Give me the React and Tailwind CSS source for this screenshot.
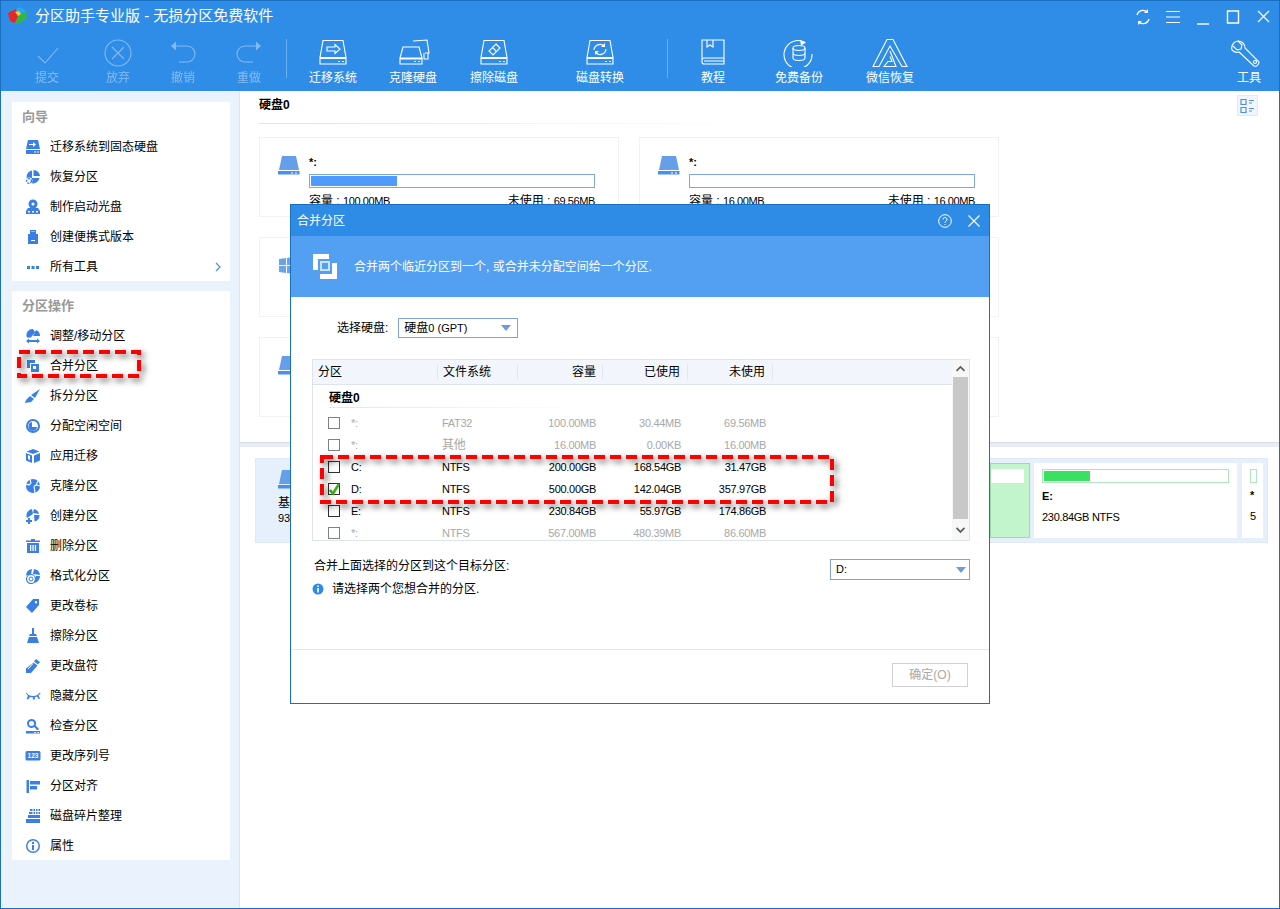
import React from 'react';

const FONT = { fontFamily: '"Liberation Sans", "Noto Sans CJK SC", sans-serif' };

const Blue = ({ children }) => (
  <svg viewBox="0 0 16 16" width="16" height="16" className="shrink-0 text-[#3a80e4]" fill="currentColor">{children}</svg>
);

const Pie = () => <path d="M7 1.500A6.500 6.500 0 1 0 14.500 9H7zM8.500 1v6H15A6.500 6.500 0 0 0 8.500 1z" />;

const SIDE_ICONS = {
  migrate: <><path d="M3 1h10l2 9H1z" /><path d="M4 5h4V3l3 2.500L8 8V6H4z" fill="#fff" /><path fillRule="evenodd" d="M1 11h14v4H1zM9 12.500v1h2v-1zM12 12.500v1h2v-1z" /></>,
  recover: <><Pie /><circle cx="4" cy="12" r="3.400" fill="#fff" /><circle cx="4" cy="12" r="2.400" fill="none" stroke="currentColor" strokeWidth="1.400" strokeDasharray="2 1" /></>,
  boot: <><circle cx="8" cy="5" r="4.500" /><circle cx="8" cy="5" r="1.500" fill="#fff" /><path fillRule="evenodd" d="M3 9l-2 3v3h14v-3l-2-3zM3 12v1.500h2V12zM7 12v1.500h2V12zM11 12v1.500h2V12z" /></>,
  usb: <><path fillRule="evenodd" d="M5 1h6v4H5zM6.500 2v1h1V2zM8.500 2v1h1V2z" /><path fillRule="evenodd" d="M3 5h10v10H3zM6 11v1h4v-1z" /></>,
  dots: <path d="M2 7h3v3H2zM6.500 7h3v3h-3zM11 7h3v3h-3z" />,
  resize: <><path d="M7 1A6 6 0 0 0 2 9.500h4L10 4 8 1zM11 2l-3 6h7a6.500 6.500 0 0 0-4-6z" /><path d="M1 13l3-2.500V12h8v-1.500l3 2.500-3 2.500V14H4v1.500z" /></>,
  merge: <><path d="M2 2h8v3H5v5H2z" /><path fillRule="evenodd" d="M6 6h8v8H6zM8 8v3h3V8z" /></>,
  split: <><path d="M15 1l-5 9-4-3z" /><path d="M5 8l4 3-3 3-6 1 1-3z" /></>,
  free: <><path fillRule="evenodd" d="M8 1a7 7 0 1 0 0 14A7 7 0 0 0 8 1zm0 2a5 5 0 1 1 0 10A5 5 0 0 1 8 3z" /><path d="M7 4v5h5a4 4 0 0 1-5 3.800A4.500 4.500 0 0 1 7 4z" /></>,
  app: <><path d="M8 1l6.500 2.500L8 6 1.500 3.500z" /><path d="M1 5l6 2.500V15l-6-2.500zM9 7.500L15 5v7.500L9 15z" /><path d="M3 7l2 1v4l-2-1z" fill="#fff" /></>,
  clone: <><circle cx="8" cy="8" r="7" /><path d="M5 1l1 4-2 2-3-1M9 8l3-1 3 1M9 8l1 7M13 3l-2 4" stroke="#fff" strokeWidth="1.100" fill="none" /></>,
  create: <><path d="M7 1a6.500 6.500 0 0 0-5 9l6-4zM9 1l-1 4 6 1a6.500 6.500 0 0 0-5-5zM9 7l5.500 0a6.500 6.500 0 0 1-5 6.500z" /><path d="M3 10h2v2h2v2H5v2H3v-2H1v-2h2z" /></>,
  del: <><path d="M6 1h4v1.500h5V4H1V2.500h5z" /><path fillRule="evenodd" d="M2 5h12v10H2zM5 7v6h1.300V7zM7.400 7v6h1.300V7zM9.800 7v6h1.300V7z" /></>,
  format: <><path d="M7 1a7 7 0 0 0-6 6.500l5-1zM9 1l-1 5 7 1a7 7 0 0 0-6-6z" /><circle cx="6" cy="11" r="4.500" fill="none" stroke="currentColor" strokeWidth="1.200" /><circle cx="6" cy="11" r="2" fill="none" stroke="currentColor" strokeWidth="1" /><path d="M11 8h4a7 7 0 0 1-6 7z" /></>,
  label: <path fillRule="evenodd" d="M8 1h6v6l-7 8-6-6zM11 3a1.200 1.200 0 1 0 0 2.400A1.200 1.200 0 0 0 11 3z" />,
  wipe: <><path d="M7 0h2v6H7z" /><path d="M5 6h6l1 2H4z" /><path d="M4 9h8l2 6H2z" /></>,
  letter: <><path d="M11 1l4 3-2 2.500-4-3z" /><path d="M8.500 4.500l4 3L6 15H1v-4.500z" /><path d="M3 11l5-5.500" stroke="#fff" strokeWidth="1" /></>,
  hide: <path d="M1 4.500C3 7 5 8 8 8s5-1 7-3.500l.5 1-2 2 1.500 3-1.500.5-1.500-2.500-2.300.8.300 2.200H7.700l.3-2.200-3-.4L3 11.500 1.500 11l1.500-3-2-2.500z" />,
  check: <><path fillRule="evenodd" d="M6.500 1a4.500 4.500 0 1 0 2.700 8.100L12 12h1.600v-1.500L10.700 7.600A4.500 4.500 0 0 0 6.500 1zm0 2a2.500 2.500 0 1 1 0 5 2.500 2.500 0 0 1 0-5z" /><path fillRule="evenodd" d="M1 13h14v2.500H1zM9 14v.8h2V14zM12 14v.8h2V14z" /></>,
  serial: <><rect x="0.500" y="3" width="15" height="9.500" rx="1.500" /><text x="8" y="10.200" textAnchor="middle" fontSize="6.500" fontWeight="700" fill="#fff" style={FONT}>123</text></>,
  align: <path d="M1.500 2h2.500v13H1.500zM5 3h10v3.500H5zM5 8h7v3.500H5z" />,
  defrag: <path d="M5 1h2.500v2H5zM8.500 1H10v2H8.500zM11 1h1.500v2H11zM13.500 1H15v2h-1.500zM4 4h3.500v2H4zM8.500 4H10v2H8.500zM11 4h1.500v2H11zM13.500 4H15v2h-1.500zM3 7h12v3H3zM1 11h14v4H1z" />,
  info: <><path fillRule="evenodd" d="M8 1a7 7 0 1 0 0 14A7 7 0 0 0 8 1zm0 1.500a5.500 5.500 0 1 1 0 11 5.500 5.500 0 0 1 0-11z" /><path d="M7 4h2v2H7zM7 7h2v5H7z" /></>,
};

const WIZARD = [
  ['migrate', '迁移系统到固态硬盘'],
  ['recover', '恢复分区'],
  ['boot', '制作启动光盘'],
  ['usb', '创建便携式版本'],
  ['dots', '所有工具'],
];

const OPS = [
  ['resize', '调整/移动分区'],
  ['merge', '合并分区'],
  ['split', '拆分分区'],
  ['free', '分配空闲空间'],
  ['app', '应用迁移'],
  ['clone', '克隆分区'],
  ['create', '创建分区'],
  ['del', '删除分区'],
  ['format', '格式化分区'],
  ['label', '更改卷标'],
  ['wipe', '擦除分区'],
  ['letter', '更改盘符'],
  ['hide', '隐藏分区'],
  ['check', '检查分区'],
  ['serial', '更改序列号'],
  ['align', '分区对齐'],
  ['defrag', '磁盘碎片整理'],
  ['info', '属性'],
];

const SideItem = ({ icon, text, arrow }) => (
  <div className="flex h-[30px] items-center pl-[13px] pr-[9px] pt-[2px] text-xs text-black">
    <Blue>{SIDE_ICONS[icon]}</Blue>
    <span className="ml-[9px] flex-1">{text}</span>
    {arrow && (
      <svg width="6" height="10" viewBox="0 0 6 10" fill="none" stroke="#4a90e8" strokeWidth="1.200">
        <path d="M1 1l4 4-4 4" />
      </svg>
    )}
  </div>
);

const DiskBase = ({ children }) => (
  <>
    <path d="M10 1.500h20l3 17H7z" />
    <path d="M7 19.500h26v5.500H7zM25 22.500h2M29 22.500h2" />
    {children}
  </>
);

const TOOL_ICONS = {
  commit: <path d="M11 17l7 7 13-15" />,
  discard: <><circle cx="20" cy="14" r="13" /><path d="M14 8l12 12M26 8L14 20" /></>,
  undo: <><path d="M9 7h15a8 8 0 0 1 8 8v0a8 8 0 0 1-8 8h-8" /><path d="M13 2.500L8 7l5 4.500z" fill="#fff" stroke="none" /></>,
  redo: <><path d="M31 7H16a8 8 0 0 0-8 8v0a8 8 0 0 0 8 8h8" /><path d="M27 2.500L32 7l-5 4.500z" fill="#fff" stroke="none" /></>,
  migrate: <DiskBase><path d="M14 8h8V5.500l5 4.500-5 4.500V12h-8z" /></DiskBase>,
  clone: (
    <>
      <path d="M20 2l14-1 2 13h-4M31 14v6h4v-6" />
      <path d="M10 8h16l3 11H7zM7 20h22v5H7zM21 22.500h2M25 22.500h2" />
    </>
  ),
  wipe: <DiskBase><path d="M22 5l4 4-7 7-4-4zM18 8l4 4" /></DiskBase>,
  convert: <DiskBase><path d="M14 11a6 6 0 0 1 10-4M26 10a6 6 0 0 1-10 4" /><path d="M25 4v4h-4zM15 16v-4h4z" fill="#fff" stroke="none" /></DiskBase>,
  book: <><path d="M9 1h22v24H11a2 2 0 0 1-2-2zM9 21a2 2 0 0 1 2-2h20M11 22h20" /><path d="M14 1v7l3-2 3 2V1" /></>,
  backup: <><path d="M26 3.500A14 14 0 1 0 33 15" /><path d="M21 1l6 2.500-5 3z" fill="#fff" stroke="none" /><ellipse cx="20" cy="9" rx="6" ry="2.500" /><path d="M14 9v10c0 1.500 3 2.500 6 2.500s6-1 6-2.500V9M14 14c0 1.500 3 2.500 6 2.500s6-1 6-2.500" /></>,
  recover: <><path d="M17 .500h6l14 27h-5L20 7 9 27.500H3z" /><path d="M20 12l6 15.500H14l4-5h4l-2-5" /></>,
  tools: <><path d="M9 2a7 7 0 0 0-6 9c2 2 4 3 7 2l15 14c3 1 5-2 5-4L16 9c0-4-3-7-7-7zM9 2l4 4-1 4-4 1-4-4" /><circle cx="26" cy="23" r="1.500" /></>,
};

const TOOLS = [
  { icon: 'commit', text: '提交', w: 'w-[70px]', off: true },
  { icon: 'discard', text: '放弃', w: 'w-[72px]', off: true },
  { icon: 'undo', text: '撤销', w: 'w-[58px]', off: true },
  { icon: 'redo', text: '重做', w: 'w-[74px]', off: true },
  { sep: true },
  { icon: 'migrate', text: '迁移系统', w: 'w-[92px]' },
  { icon: 'clone', text: '克隆硬盘', w: 'w-[68px]' },
  { icon: 'wipe', text: '擦除磁盘', w: 'w-[94px]' },
  { icon: 'convert', text: '磁盘转换', w: 'w-[118px]' },
  { spacer: true },
  { sep: true },
  { icon: 'book', text: '教程', w: 'w-[90px]' },
  { icon: 'backup', text: '免费备份', w: 'w-[82px]' },
  { icon: 'recover', text: '微信恢复', w: 'w-[100px]' },
];

const ToolItem = ({ icon, text, w, off }) => (
  <div className={`flex flex-col items-center ${w} ${off ? 'opacity-40' : ''}`}>
    <svg viewBox="0 0 40 28" width="40" height="28" fill="none" stroke="#fff" strokeWidth="1.100">{TOOL_ICONS[icon]}</svg>
    <span className="mt-[5px] text-xs leading-[12px] text-white">{text}</span>
  </div>
);

const DiskGlyph = () => (
  <svg width="22" height="19" viewBox="0 0 22 19" className="shrink-0">
    <path d="M4 0h14l3 14H1z" fill="#669fe9" />
    <path fillRule="evenodd" d="M0 15h21.500v3.500H0zM13 16.500v1h2v-1zM17 16.500v1h2v-1z" fill="#4b8fe8" />
  </svg>
);

const WinGlyph = () => (
  <svg width="20" height="19" viewBox="0 0 20 19" className="shrink-0" fill="#6ba3ea">
    <path d="M1 3l7-1v7H1zM9 2l9-1.500V9H9zM1 10h7v7l-7-1zM9 10h9v8.500L9 17z" />
  </svg>
);

const PartCard = ({ used, cap, free, glyph, hidden }) => (
  <div className="h-[80px] w-[360px] border border-[#f0f2f5] bg-white">
    <div className="flex pl-[18px] pt-[18px]">
      {glyph}
      <div className={`ml-[9px] w-[286px] ${hidden ? 'invisible' : ''}`}>
        <div className="h-[18px] text-[11px] font-bold leading-[12px] text-black">*:</div>
        <div className="h-[14px] border border-[#7fa8e0] bg-white p-[1px]">
          <div className="h-full bg-[#4e9bfb]" style={{ width: used }} />
        </div>
        <div className="mt-[6px] flex justify-between text-xs leading-[14px] text-black">
          <span>容量 : <span className="text-[11px] tracking-[-0.4px]">{cap}</span></span>
          <span>未使用 : <span className="text-[11px] tracking-[-0.4px]">{free}</span></span>
        </div>
      </div>
    </div>
  </div>
);

const ROWS = [
  { name: '*:', fs: 'FAT32', cap: '100.00MB', used: '30.44MB', free: '69.56MB', off: true },
  { name: '*:', fs: '其他', cap: '16.00MB', used: '0.00KB', free: '16.00MB', off: true },
  { name: 'C:', fs: 'NTFS', cap: '200.00GB', used: '168.54GB', free: '31.47GB' },
  { name: 'D:', fs: 'NTFS', cap: '500.00GB', used: '142.04GB', free: '357.97GB', checked: true },
  { name: 'E:', fs: 'NTFS', cap: '230.84GB', used: '55.97GB', free: '174.86GB' },
  { name: '*:', fs: 'NTFS', cap: '567.00MB', used: '480.39MB', free: '86.60MB', off: true },
];

const Row = ({ r }) => (
  <div className={`flex h-[22px] shrink-0 items-center text-[11px] tracking-[-0.3px] ${r.off ? 'text-[#a8a8a8]' : 'text-black'}`}>
    <div className={`relative ml-[15px] h-[12px] w-[12px] border ${r.off ? 'border-[#808080]' : 'border-[#303030]'}`}>
      {r.checked && (
        <svg className="absolute -left-[1px] -top-[2px]" width="13" height="14" viewBox="0 0 13 14" fill="none" stroke="#3cae1c" strokeWidth="2.600">
          <path d="M2 8l3 3.500L11 2" />
        </svg>
      )}
    </div>
    <span className="ml-[11px] w-[91px]">{r.name}</span>
    <span className={`w-[80px] ${r.fs === '其他' ? 'text-xs' : ''}`}>{r.fs}</span>
    <span className="w-[74px] text-right">{r.cap}</span>
    <span className="w-[85px] text-right">{r.used}</span>
    <span className="w-[85px] text-right">{r.free}</span>
  </div>
);

const Caret = () => (
  <svg width="10" height="6" viewBox="0 0 10 6" className="shrink-0" fill="#6f9bd8">
    <path d="M0 0h10L5 6z" />
  </svg>
);

const Dashed = ({ x, y, w, h }) => (
  <rect x={x} y={y} width={w} height={h} fill="none" stroke="#ff0000" strokeWidth="4" strokeDasharray="11 5" />
);

export default function App() {
  return (
    <div className="relative flex h-[909px] w-[1280px] flex-col overflow-hidden border-x border-b border-[#1a6fc0] bg-white" style={FONT}>
      {/* title + toolbar */}
      <div className="h-[91px] shrink-0 border-t border-[#1a6fc0] bg-[#2f8de7]">
        <div className="flex h-[38px] items-start">
          <svg width="20" height="18" viewBox="0 0 20 18" className="ml-[7px] mt-[6px] shrink-0">
            <path d="M0 6l8-4 2 8-3 6-5-2z" fill="#e8252a" />
            <path d="M8 2l5-2 5 4-8 5z" fill="#2aa8e8" />
            <path d="M10 9l8-5 1 7-8 6-4-1z" fill="#35b548" />
            <path d="M7 5l4-1 2 3-3 2z" fill="#f5d020" />
          </svg>
          <span className="ml-[7px] mt-[5px] text-[15px] leading-[20px] text-white">分区助手专业版 - 无损分区免费软件</span>
          <div className="ml-auto mr-[1px] mt-[8px] flex text-white">
            <svg width="30" height="16" viewBox="0 0 30 16" fill="none" stroke="#fff" strokeWidth="1.200">
              <path d="M9 6a6 6 0 0 1 10-3M21 10a6 6 0 0 1-10 3" />
              <path d="M20 0v4h-4zM10 16v-4h4z" fill="#fff" stroke="none" />
            </svg>
            <svg width="30" height="16" viewBox="0 0 30 16" fill="none" stroke="#fff" strokeWidth="1.200">
              <path d="M8 2.500h14M8 8h14M8 13.500h14" />
            </svg>
            <svg width="30" height="16" viewBox="0 0 30 16" fill="none" stroke="#fff" strokeWidth="1.400">
              <path d="M9 15h12" />
            </svg>
            <svg width="30" height="16" viewBox="0 0 30 16" fill="none" stroke="#fff" strokeWidth="1.400">
              <path d="M9.500 2h11v12h-11z" />
            </svg>
            <svg width="30" height="16" viewBox="0 0 30 16" fill="none" stroke="#fff" strokeWidth="1.200">
              <path d="M10 2l11 11M21 2L10 13" />
            </svg>
          </div>
        </div>
        <div className="flex items-start pl-[11px]">
          {TOOLS.map((t, i) => {
            if (t.sep) return <div key={i} className="h-[39px] w-[1px] bg-white/30" />;
            if (t.spacer) return <div key={i} className="w-[8px]" />;
            return <ToolItem key={i} {...t} />;
          })}
          <div className="ml-auto">
            <ToolItem icon="tools" text="工具" w="w-[60px]" />
          </div>
        </div>
      </div>

      <div className="flex min-h-0 flex-1">
        {/* sidebar */}
        <div className="w-[239px] shrink-0 border-r border-[#dde5f0] bg-[#eaf2fd] pl-[11px] pr-[9px] pt-[11px]">
          <div className="bg-white">
            <div className="h-[29px] pl-[10px] pt-[5px] text-[13px] font-bold leading-[20px] text-[#999]">向导</div>
            {WIZARD.map(([icon, text], i) => (
              <SideItem key={text} icon={icon} text={text} arrow={i === 4} />
            ))}
          </div>
          <div className="mt-[10px] bg-white">
            <div className="h-[29px] pl-[10px] pt-[5px] text-[13px] font-bold leading-[20px] text-[#999]">分区操作</div>
            {OPS.map(([icon, text]) => (
              <SideItem key={text} icon={icon} text={text} />
            ))}
          </div>
        </div>

        {/* main */}
        <div className="flex min-w-0 flex-1 flex-col">
          <div className="flex h-[32px] items-start pl-[19px] pr-[21px]">
            <span className="mt-[7px] text-xs font-bold leading-[14px] text-black">硬盘0</span>
            <div className="ml-auto mt-[4px] flex h-[21px] w-[21px] items-center justify-center border border-[#e3e9f2] bg-[#f2f6fc]">
              <svg width="15" height="16" viewBox="0 0 15 16" fill="none" stroke="#4a90e8" strokeWidth="1.200">
                <path d="M1 1.500h5v5H1zM1 9.500h5v5H1zM9 2.500h5M9 5h3M9 10.500h5M9 13h3" />
              </svg>
            </div>
          </div>
          <div className="ml-[19px] h-[1px] w-[500px] bg-gradient-to-r from-[#dfe3ea] to-white" />
          <div className="flex flex-col gap-[20px] pl-[19px] pt-[13px]">
            <div className="flex gap-[20px]">
              <PartCard used="30.4%" cap="100.00MB" free="69.56MB" glyph={<DiskGlyph />} />
              <PartCard used="0%" cap="16.00MB" free="16.00MB" glyph={<DiskGlyph />} />
            </div>
            <div className="flex gap-[20px]">
              <PartCard glyph={<WinGlyph />} hidden used="0%" />
              <PartCard glyph={<DiskGlyph />} hidden used="0%" />
            </div>
            <div className="flex gap-[20px]">
              <PartCard glyph={<DiskGlyph />} hidden used="0%" />
              <PartCard glyph={<DiskGlyph />} hidden used="0%" />
            </div>
          </div>
          <div className="mt-[25px] h-[5px] border-t border-[#d6dce6] bg-[#e8edf5]" />
          <div className="ml-[15px] mr-[11px] mt-[11px] flex h-[85px] border border-[#dfe9f8] bg-[#e6effc] p-[4px]">
            <div className="flex-1 pl-[18px] pt-[7px]">
              <DiskGlyph />
              <div className="mt-[7px] text-xs leading-[14px] text-black">基本GPT</div>
              <div className="mt-[1px] text-[11px] leading-[14px] text-black">931.51GB</div>
            </div>
            <div className="flex w-[40px] border border-[#97dfa9] bg-[#c3f5cc] pr-[5px] pt-[5px]">
              <div className="h-[14px] w-full bg-white" />
            </div>
            <div className="ml-[4px] w-[203px] bg-white px-[8px] pt-[6px]">
              <div className="h-[14px] border border-[#b1e5bf] p-[1px]">
                <div className="h-full w-[25%] bg-[#3ae062]" />
              </div>
              <div className="mt-[7px] text-[11px] font-bold leading-[12px] text-black">E:</div>
              <div className="mt-[9px] text-[11px] leading-[12px] tracking-[-0.3px] text-black">230.84GB NTFS</div>
            </div>
            <div className="ml-[5px] w-[21px] bg-white pl-[8px] pt-[6px]">
              <div className="h-[14px] w-[7px] border border-[#b1e5bf]" />
              <div className="mt-[6px] text-[11px] font-bold leading-[12px] text-black">*</div>
              <div className="mt-[9px] text-[11px] leading-[12px] text-black">5</div>
            </div>
          </div>
        </div>
      </div>

      {/* dialog */}
      <div className="absolute left-[289px] top-[204px] flex h-[500px] w-[700px] flex-col border border-[#1a6fc0] bg-white">
        <div className="flex h-[31px] shrink-0 items-center bg-[#2e8ce6] pl-[6px] text-xs text-white">
          <span>合并分区</span>
          <svg width="14" height="14" viewBox="0 0 14 14" className="ml-auto" fill="none" stroke="#fff" strokeWidth="1">
            <circle cx="7" cy="7" r="6.300" />
            <path d="M5 5.500a2 2 0 1 1 3 1.700c-.7.400-1 .8-1 1.600M7 10v1" />
          </svg>
          <svg width="14" height="14" viewBox="0 0 14 14" className="ml-[15px] mr-[8px]" fill="none" stroke="#fff" strokeWidth="1.100">
            <path d="M1.500 1.500l11 11M12.500 1.500l-11 11" />
          </svg>
        </div>
        <div className="flex h-[61px] shrink-0 items-center bg-[#53a0f3] pl-[22px] text-xs text-white">
          <svg width="25" height="26" viewBox="0 0 25 26" fill="#fff">
            <path d="M0 0h16v5H5v11H0z" />
            <path d="M19 9h5v16H7v-5h12z" />
            <path d="M8 8h8v8H8z" fill="none" stroke="#fff" strokeWidth="2" opacity="0.7" />
          </svg>
          <span className="ml-[16px]">合并两个临近分区到一个, 或合并未分配空间给一个分区.</span>
        </div>

        <div className="flex items-center pl-[46px] pt-[21px] text-xs text-black">
          <span>选择硬盘:</span>
          <div className="ml-[10px] flex h-[20px] w-[120px] items-center justify-between border border-[#7fa3d6] pl-[5px] pr-[6px] text-[11px]">
            <span><span className="text-xs">硬盘</span>0 (GPT)</span>
            <Caret />
          </div>
        </div>

        <div className="ml-[21px] mt-[21px] flex h-[182px] w-[658px] border border-[#dfe3ee]">
          <div className="flex min-w-0 flex-1 flex-col overflow-hidden">
            <div className="flex h-[25px] shrink-0 items-center border-b border-[#dde3ef] bg-[#f2f5fb] text-xs text-black">
              <span className="w-[125px] border-r border-[#e3e6ee] pl-[5px]">分区</span>
              <span className="w-[80px] border-r border-[#e3e6ee] pl-[5px]">文件系统</span>
              <span className="w-[85px] border-r border-[#e3e6ee] pr-[6px] text-right">容量</span>
              <span className="w-[85px] border-r border-[#e3e6ee] pr-[7px] text-right">已使用</span>
              <span className="w-[85px] border-r border-[#e3e6ee] pr-[7px] text-right">未使用</span>
            </div>
            <div className="ml-[14px] h-[23px] w-[260px] shrink-0 bg-white pl-[2px]">
              <div className="h-[23px] bg-gradient-to-r from-[#dfe6f2] to-white bg-[length:100%_1px] bg-bottom bg-no-repeat pt-[6px] text-xs font-bold leading-[14px] text-black">硬盘0</div>
            </div>
            <div className="h-[4px] shrink-0" />
            {ROWS.map((r, i) => <Row key={i} r={r} />)}
          </div>
          <div className="flex w-[17px] shrink-0 flex-col items-center bg-[#f7f7f7]">
            <svg width="11" height="17" viewBox="0 0 11 17" fill="none" stroke="#606060" strokeWidth="1.800">
              <path d="M1.500 11l4-4 4 4" />
            </svg>
            <div className="h-[143px] w-[15px] bg-[#c8c8c8]" />
            <svg width="11" height="21" viewBox="0 0 11 21" fill="none" stroke="#606060" strokeWidth="1.800">
              <path d="M1.500 9l4 4 4-4" />
            </svg>
          </div>
        </div>

        <div className="ml-[23px] mr-[19px] mt-[15px] flex items-start text-xs text-black">
          <span className="mt-[2px]">合并上面选择的分区到这个目标分区:</span>
          <div className="ml-auto mt-[3px] flex h-[21px] w-[140px] items-center justify-between border border-[#7fa3d6] pl-[5px] pr-[3px] text-[11px]">
            <span>D:</span>
            <Caret />
          </div>
        </div>
        <div className="ml-[21px] mt-[1px] flex items-center text-xs text-black">
          <svg width="12" height="12" viewBox="0 0 12 12">
            <circle cx="6" cy="6" r="5.500" fill="#2e8ce6" />
            <path d="M5.200 2.500h1.600v1.500H5.200zM5.200 5h1.600v4.500H5.200z" fill="#fff" />
          </svg>
          <span className="ml-[8px]">请选择两个您想合并的分区.</span>
        </div>

        <div className="mt-auto flex h-[54px] items-start justify-end border-t border-[#e8e8e8] pr-[21px] pt-[13px]">
          <div className="flex h-[24px] w-[76px] items-center justify-center border border-[#d0d0d0] text-xs text-[#a8a8a8]">确定(O)</div>
        </div>
      </div>

      {/* red markup */}
      <svg width="1280" height="909" className="pointer-events-none absolute -left-[1px] top-0 drop-shadow-[3px_3px_3px_rgba(0,0,0,0.6)]">
        <Dashed x={19} y={352} w={120} h={24} />
        <Dashed x={322} y={457} w={510} h={45} />
      </svg>
    </div>
  );
}
